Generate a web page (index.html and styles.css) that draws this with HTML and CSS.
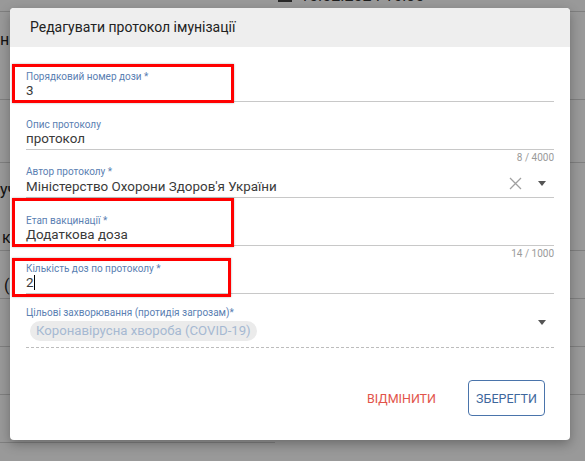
FILE: index.html
```html
<!DOCTYPE html>
<html lang="uk">
<head>
<meta charset="utf-8">
<link rel="stylesheet" href="styles.css">
<title>Редагувати протокол імунізації</title>
</head>
<body>
<div class="page">
  <div class="bg-row bg-top"><span class="cal"></span><span class="date">15.02.2024 16:35</span></div>
  <div class="bg-row bg-r1"><span class="bg-text t1">ни</span></div>
  <div class="bg-row bg-r2"></div>
  <div class="bg-row bg-r3"><span class="bg-text t2">уч</span><span class="bg-text t3">к</span></div>
  <div class="bg-row bg-r4"><span class="bg-text t4">(</span></div>
  <div class="bg-row bg-r5"></div>
  <div class="bg-row bg-r6"></div>
  <div class="bg-row bg-r7 short"></div>
</div>
<div class="backdrop"></div>
<div class="dialog">
  <div class="dialog-header">Редагувати протокол імунізації</div>
  <div class="dialog-body">
    <div class="field">
      <div class="mark mark-1"></div>
      <div class="label">Порядковий номер дози *</div>
      <div class="value">3</div>
    </div>
    <div class="field">
      <div class="label">Опис протоколу</div>
      <div class="value">протокол</div>
    </div>
    <div class="hint">8 / 4000</div>
    <div class="field">
      <div class="label">Автор протоколу *</div>
      <div class="value-row">
        <div class="value">Міністерство Охорони Здоров'я України</div>
        <svg class="clear" width="13" height="13" viewBox="0 0 13 13"><path d="M1 1L12 12M12 1L1 12" stroke="#a0a0a0" stroke-width="1.3" fill="none"/></svg>
        <span class="arrow"></span>
      </div>
    </div>
    <div class="field">
      <div class="mark mark-2"></div>
      <div class="label">Етап вакцинації *</div>
      <div class="value">Додаткова доза</div>
    </div>
    <div class="hint">14 / 1000</div>
    <div class="field">
      <div class="mark mark-3"></div>
      <div class="label">Кількість доз по протоколу *</div>
      <div class="value">2<span class="caret"></span></div>
    </div>
    <div class="field field-chips">
      <div class="label">Цільові захворювання (протидія загрозам)*</div>
      <div class="value-row">
        <div class="chips"><span class="chip">Коронавірусна хвороба (COVID-19)</span></div>
        <span class="arrow arrow-low"></span>
      </div>
    </div>
    <div class="actions">
      <button class="btn btn-cancel">ВІДМІНИТИ</button>
      <button class="btn btn-save">ЗБЕРЕГТИ</button>
    </div>
  </div>
</div>
</body>
</html>
```

FILE: styles.css
```css
* { box-sizing: border-box; }
html, body {
  margin: 0;
  padding: 0;
  width: 585px;
  height: 461px;
  overflow: hidden;
  background: #ffffff;
  font-family: Roboto, "Noto Sans", sans-serif;
}
.page {
  position: relative;
  width: 585px;
}
.bg-row {
  border-bottom: 1px solid #d4d4d4;
  position: relative;
  color: #222;
  font-size: 16px;
}
.bg-top { height: 12px; display: flex; align-items: flex-start; padding-left: 278px; gap: 8px; }
.cal { display: block; width: 14px; height: 3px; background: #444; margin-top: -1px; }
.date { display: block; margin-top: -14px; line-height: 20px; font-size: 16px; color: #333; }
.bg-r1 { height: 88px; }
.bg-r2 { height: 63px; }
.bg-r3 { height: 88px; }
.bg-r4 { height: 48px; }
.bg-r5 { height: 48px; }
.bg-r6 { height: 48px; }
.bg-r7 { height: 48px; }
.bg-r7.short { width: 275px; }
.bg-text { display: block; line-height: 20px; }
.t1 { padding-top: 18px; margin-left: 0; }
.t2 { padding-top: 17px; margin-left: 0; }
.t3 { padding-top: 28px; margin-left: 2px; }
.t4 { padding-top: 25px; margin-left: 4px; }

.backdrop {
  position: absolute;
  inset: 0;
  background: rgba(0, 0, 0, 0.4);
}

.dialog {
  position: absolute;
  left: 10px;
  top: 8px;
  width: 560px;
  height: 432px;
  background: #fff;
  border-radius: 4px;
  overflow: hidden;
  box-shadow: 0 4px 12px rgba(0,0,0,0.3);
  display: flex;
  flex-direction: column;
}
.dialog-header {
  height: 39px;
  background: #eeeeee;
  padding-left: 20px;
  font-size: 14px;
  line-height: 39px;
  color: #222;
}
.dialog-body {
  padding: 7px 16px 0 16px;
  display: flex;
  flex-direction: column;
}
.field {
  position: relative;
  height: 48px;
  border-bottom: 1px solid #c8c8c8;
  display: flex;
  flex-direction: column;
  justify-content: flex-end;
  padding-bottom: 1px;
}
.label {
  font-size: 10px;
  line-height: 12px;
  margin-bottom: -1px;
  color: #5a80b2;
}
.value {
  font-size: 13.4px;
  line-height: 18px;
  color: #3a3a3a;
}
.value-row {
  display: flex;
  align-items: center;
}
.value-row .value { flex: 1; }
.clear { margin-bottom: 6px; margin-right: 16px; }
.arrow {
  width: 0;
  height: 0;
  border-left: 4.5px solid transparent;
  border-right: 4.5px solid transparent;
  border-top: 5px solid #555;
  margin-right: 8px;
  margin-bottom: 6px;
}
.arrow-low { margin-bottom: 16px; }
.hint {
  height: 0;
  text-align: right;
  font-size: 10px;
  line-height: 16px;
  color: #9a9a9a;
  overflow: visible;
}
.caret {
  display: inline-block;
  width: 1px;
  height: 15px;
  background: #000;
  vertical-align: -3px;
}
.field-chips {
  height: 54px;
  border-bottom: 1px dashed #bdbdbd;
  padding-bottom: 6px;
}
.field-chips .label { margin-bottom: 0; }
.chips { flex: 1; padding-top: 1px; }
.chip {
  display: inline-block;
  height: 20px;
  line-height: 20px;
  padding: 0 6px;
  margin-left: 4px;
  border-radius: 10px;
  background: #ebebeb;
  color: #a6b9d2;
  font-size: 13.2px;
}
.mark {
  position: absolute;
  border: 3px solid #ff0000;
  box-shadow: 0 0 2px rgba(0,0,0,0.3);
  pointer-events: none;
}
.mark-1 { left: -14px; top: 10px; width: 222px; height: 39px; }
.mark-2 { left: -14px; top: 0; width: 222px; height: 49px; }
.mark-3 { left: -14px; top: 12px; width: 219px; height: 39px; }

.actions {
  display: flex;
  justify-content: flex-end;
  align-items: center;
  margin-top: 32px;
  padding-right: 9px;
  gap: 16px;
}
.btn {
  height: 36px;
  font-family: Roboto, "Noto Sans", sans-serif;
  font-size: 12.5px;
  background: transparent;
  border-radius: 4px;
  cursor: pointer;
}
.btn-cancel {
  border: none;
  color: #e2534a;
  padding: 0 16px;
}
.btn-save {
  width: 77px;
  padding: 0;
  border: 1px solid #4a74ab;
  color: #3e679c;
}
```
